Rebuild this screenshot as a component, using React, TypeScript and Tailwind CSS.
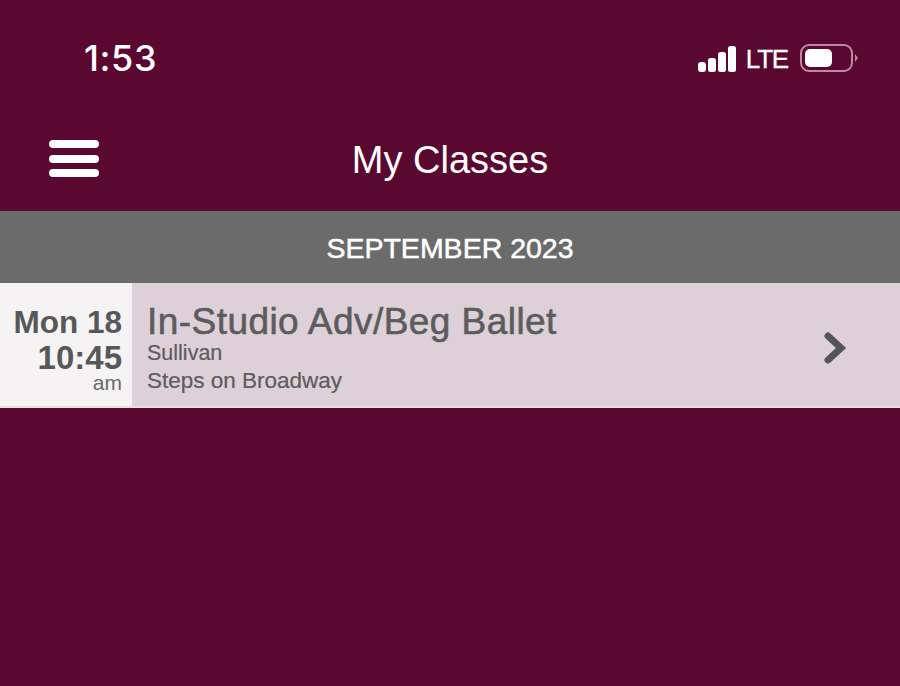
export default function App() {
  return (
    <div className="w-[900px] h-[686px] overflow-hidden bg-[#5a0830] font-['Liberation_Sans',Arial,sans-serif]">
      {/* Status bar */}
      <div className="h-[114px] flex items-start justify-between pl-[84px] pr-[42px]">
        <span className="mt-[38px] text-[36px] leading-[40px] font-medium text-white font-['Inter',sans-serif] tracking-[0.6px]">1:53</span>
        <div className="mt-[42px] flex items-center">
          <svg width="40" height="28" viewBox="0 0 40 28" fill="white">
            <rect x="0" y="17" width="8" height="10" rx="3" />
            <rect x="10" y="13" width="8" height="14" rx="2.5" />
            <rect x="20" y="7" width="8" height="20" rx="2.5" />
            <rect x="30" y="1" width="8" height="26" rx="2.5" />
          </svg>
          <span className="ml-[8px] text-[26px] leading-[32px] text-white tracking-[-1.2px] [-webkit-text-stroke:0.3px_white] mt-[1px]">LTE</span>
          <svg className="ml-[12px]" width="58" height="30" viewBox="0 0 58 30">
            <rect x="1" y="1" width="51" height="26" rx="8" fill="none" stroke="#b98aa2" strokeWidth="2" />
            <rect x="5" y="5" width="27" height="18" rx="5" fill="white" />
            <path d="M55 10 L58 14 L55 18 Z" fill="#b98aa2" />
          </svg>
        </div>
      </div>

      {/* Nav */}
      <div className="relative h-[97px] flex items-start justify-center">
        <div className="absolute left-[49px] top-[26px] flex flex-col gap-[6.5px]">
          <div className="w-[50px] h-[8px] rounded-full bg-white" />
          <div className="w-[50px] h-[8px] rounded-full bg-white" />
          <div className="w-[50px] h-[8px] rounded-full bg-white" />
        </div>
        <span className="mt-[24px] text-[38px] leading-[44px] text-white">My Classes</span>
      </div>

      {/* Month header */}
      <div className="h-[72px] bg-[#6b6b6b] flex items-center justify-center pt-[3px] text-[28.5px] text-white [-webkit-text-stroke:0.5px_white]">
        SEPTEMBER 2023
      </div>

      {/* Class row */}
      <div className="h-[125px] flex border-b-[2px] border-[#e6dfe3] bg-[#ddd0d8]">
        <div className="w-[132px] shrink-0 bg-[#f5f3f4] flex flex-col items-end pr-[10px] pt-[21px] text-[#585858]">
          <span className="text-[31.5px] leading-[36px] font-bold whitespace-nowrap">Mon 18</span>
          <span className="text-[33px] leading-[36px] font-bold whitespace-nowrap">10:45</span>
          <span className="text-[21px] leading-[14px] text-[#6a6a6a]">am</span>
        </div>
        <div className="flex-1 flex items-start justify-between pl-[15px] pr-[52px] pt-[21px]">
          <div className="flex flex-col text-[#5c5c5c]">
            <span className="text-[37px] leading-[36px] tracking-[0.45px] [-webkit-text-stroke:0.6px_#5c5c5c]">In-Studio Adv/Beg Ballet</span>
            <span className="text-[21.5px] leading-[27px] [-webkit-text-stroke:0.2px_#5c5c5c]">Sullivan</span>
            <span className="text-[22.5px] leading-[27px] [-webkit-text-stroke:0.2px_#5c5c5c]">Steps on Broadway</span>
          </div>
          <svg className="mt-[28px]" width="24" height="32" viewBox="0 0 24 32" fill="none" stroke="#555555" strokeWidth="7" strokeLinecap="round" strokeLinejoin="miter">
            <path d="M4 4 L17 16 L4 28" />
          </svg>
        </div>
      </div>
    </div>
  );
}
